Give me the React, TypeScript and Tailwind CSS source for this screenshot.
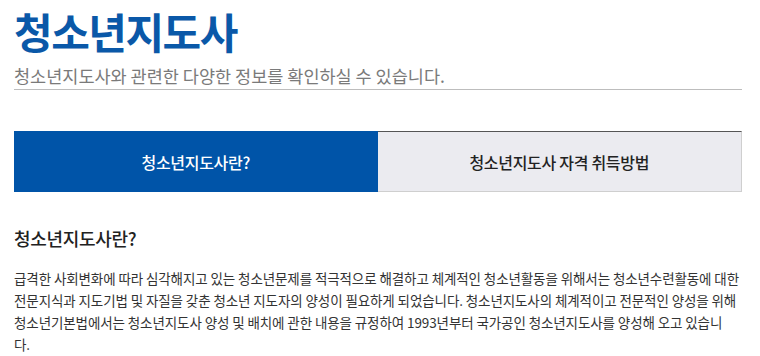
import React from "react";

export default function App() {
  const font = { fontFamily: '"Noto Sans CJK KR", "Noto Sans", sans-serif' };
  return (
    <div className="w-[760px] h-[356px] bg-white overflow-hidden pl-[14px] pr-[18px]" style={font}>
      <h1 className="pt-[9px] text-[42px] leading-[44px] font-bold text-[#0a58a8] tracking-[-1.5px]">청소년지도사</h1>
      <p className="mt-[12px] text-[17.5px] leading-[22px] text-[#7a7a7a]">
        청소년지도사와 관련한 다양한 정보를 확인하실 수 있습니다.
      </p>
      <div className="mt-[2px] border-b border-[#bdbdbd]" />
      <div className="mt-[41px] flex h-[61px]">
        <div className="flex-1 bg-[#0054a8] flex items-center justify-center text-white text-[16px] font-medium tracking-[-0.3px]">
          청소년지도사란?
        </div>
        <div className="flex-1 bg-[#ebebf0] border-t border-t-[#555] border-r border-b border-r-[#cfcfcf] border-b-[#cfcfcf] flex items-center justify-center text-[#222] text-[16px] font-medium tracking-[-0.3px]">
          청소년지도사 자격 취득방법
        </div>
      </div>
      <h2 className="mt-[34px] text-[18px] leading-[24px] font-medium text-[#222] tracking-[-0.3px]">청소년지도사란?</h2>
      <p className="mt-[17px] text-[13.5px] leading-[22px] text-[#333] tracking-[-0.1px] whitespace-nowrap">
        급격한 사회변화에 따라 심각해지고 있는 청소년문제를 적극적으로 해결하고 체계적인 청소년활동을 위해서는 청소년수련활동에 대한
        <br />
        전문지식과 지도기법 및 자질을 갖춘 청소년 지도자의 양성이 필요하게 되었습니다. 청소년지도사의 체계적이고 전문적인 양성을 위해
        <br />
        청소년기본법에서는 청소년지도사 양성 및 배치에 관한 내용을 규정하여 1993년부터 국가공인 청소년지도사를 양성해 오고 있습니
        <br />
        다.
      </p>
    </div>
  );
}
